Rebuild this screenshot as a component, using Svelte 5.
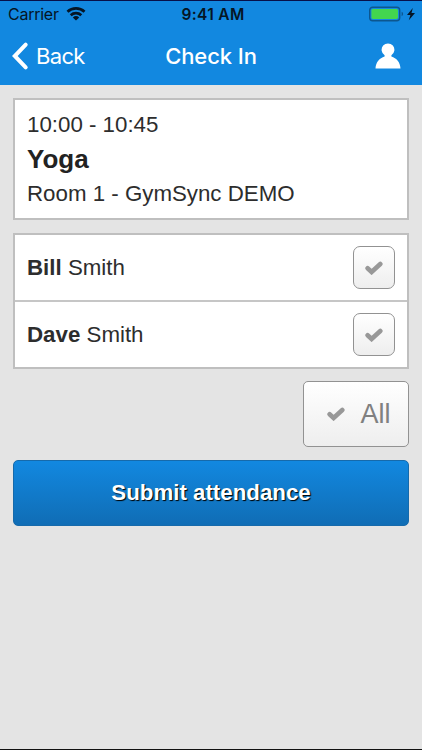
<script>
  const session = { time: '10:00 - 10:45', name: 'Yoga', place: 'Room 1 - GymSync DEMO' };
  const members = [
    { first: 'Bill', last: 'Smith' },
    { first: 'Dave', last: 'Smith' },
  ];
</script>

{#snippet tick()}
  <svg class="tick" width="18" height="14" viewBox="0 0 18 14" aria-hidden="true">
    <path d="M2.6 7.3 6.6 11 15.3 3" fill="none" stroke="#989898" stroke-width="4.6" stroke-linecap="round" stroke-linejoin="miter" />
  </svg>
{/snippet}

<div class="screen">
  <header>
    <div class="status">
      <div class="carrier">
        <span>Carrier</span>
        <svg width="20" height="14" viewBox="0 0 20 14" aria-hidden="true">
          <g fill="none" stroke="#051525" stroke-width="2.8">
            <path d="M1.5 4.8a12.4 12.4 0 0 1 17 0" />
            <path d="M4.7 8.2a8 8 0 0 1 10.6 0" />
          </g>
          <path d="M6.8 10.4a4.8 4.8 0 0 1 6.4 0L10 13.6z" fill="#051525" />
        </svg>
      </div>
      <span class="clock">9:41 AM</span>
      <div class="power">
        <svg width="48" height="16" viewBox="0 0 48 16" aria-hidden="true">
          <rect x="1.7" y="1.2" width="30" height="13.6" rx="3" fill="none" stroke="#0c568f" stroke-width="1.4" />
          <rect x="3.4" y="3" width="26.6" height="10" rx="1.4" fill="#43d64f" />
          <path d="M33.6 5.8q1.5.6 1.5 2.2t-1.5 2.2z" fill="#0c568f" />
          <path d="M44.8 2 39 8.9h3.4L40.8 14.3 47 7.1h-3.5z" fill="#051525" />
        </svg>
      </div>
    </div>
    <nav>
      <button class="back">
        <svg width="18" height="30" viewBox="0 0 18 30" aria-hidden="true">
          <path d="M14.7 3.6 3.8 15l10.9 11.4" fill="none" stroke="#fff" stroke-width="4" stroke-linecap="round" stroke-linejoin="miter" />
        </svg>
        <span>Back</span>
      </button>
      <h1>Check In</h1>
      <button class="user" aria-label="Profile">
        <svg width="26" height="26" viewBox="0 0 26 26" aria-hidden="true">
          <path d="M.5 25.6C.8 19 4.5 15.2 9.6 13.5v-1.3a6.4 6.4 0 1 1 6.8 0v1.3c5.1 1.7 8.8 5.5 9.1 12.1z" fill="#fff" />
        </svg>
      </button>
    </nav>
  </header>

  <main>
    <section class="session">
      <p class="time">{session.time}</p>
      <h2>{session.name}</h2>
      <p class="place">{session.place}</p>
    </section>

    <ul>
      {#each members as member}
        <li>
          <span class="member"><b>{member.first}</b> {member.last}</span>
          <button class="check" aria-label="Mark present">{@render tick()}</button>
        </li>
      {/each}
    </ul>

    <button class="all">{@render tick()}<span>All</span></button>
    <button class="submit">Submit attendance</button>
  </main>
</div>

<style>
  :global(body) { margin: 0; background: #e4e4e4; }
  .screen {
    box-sizing: border-box;
    height: 750px;
    border-top: 1px solid #07104a;
    border-bottom: 1px solid #111;
    background: #e4e4e4;
    color: #2d2d2d;
    font-family: "Liberation Sans", Arial, sans-serif;
    font-size: 22.3px;
    overflow: hidden;
  }
  button { box-sizing: border-box; margin: 0; padding: 0; border: 0; background: none; font: inherit; color: inherit; }
  h1, h2, p, ul { margin: 0; padding: 0; list-style: none; }
  svg { display: block; flex: none; }
  header {
    box-sizing: border-box;
    height: 84px;
    background: #1288e0;
    font-family: Inter, Roboto, sans-serif;
  }
  .status, nav { display: grid; grid-template-columns: 1fr auto 1fr; align-items: center; }
  .status { height: 26px; color: #051525; font-size: 16px; line-height: 20px; }
  .carrier { display: flex; align-items: center; gap: 7px; padding-left: 8px; letter-spacing: -.25px; }
  .clock { padding: 2px 0 0 4px; font-weight: 600; font-size: 15.5px; letter-spacing: .35px; }
  .power { display: flex; justify-content: flex-end; padding-right: 6px; }
  nav { height: 57px; color: #fff; }
  .back { display: flex; align-items: center; gap: 7px; padding-left: 11px; font-size: 22px; letter-spacing: -.65px; }
  h1 { font-size: 22px; font-weight: 500; letter-spacing: -.1px; }
  .user { justify-self: end; padding-right: 21px; }
  main { display: flex; flex-direction: column; padding: 13px 13px 0; }
  .session { box-sizing: border-box; height: 122px; padding: 7px 12px; border: 2px solid #bfbfbf; background: #fff; }
  .session p, h2 { height: 34.5px; line-height: 35px; white-space: nowrap; }
  h2 { font-size: 26px; color: #222; }
  ul { margin-top: 13px; border: 2px solid #bfbfbf; background: #fff; }
  li { display: flex; align-items: center; justify-content: space-between; height: 65px; padding: 0 12px; }
  li + li { border-top: 2px solid #c6c6c6; }
  .check, .all {
    display: flex;
    align-items: center;
    justify-content: center;
    border: 1.5px solid #929292;
    background: linear-gradient(#fff, #eee);
  }
  .check { width: 42px; height: 43px; border-radius: 7px; }
  .all { align-self: flex-end; gap: 15px; width: 106px; height: 66px; margin-top: 12px; padding-left: 6px; border-radius: 5px; color: #808080; font-size: 27px; }
  .submit {
    height: 66px;
    margin-top: 13px;
    border: 1px solid #166aab;
    border-radius: 5px;
    background: linear-gradient(#1288e0, #106db5);
    color: #fff;
    font-weight: bold;
    text-shadow: 1px 1px 1px #000;
  }
</style>
